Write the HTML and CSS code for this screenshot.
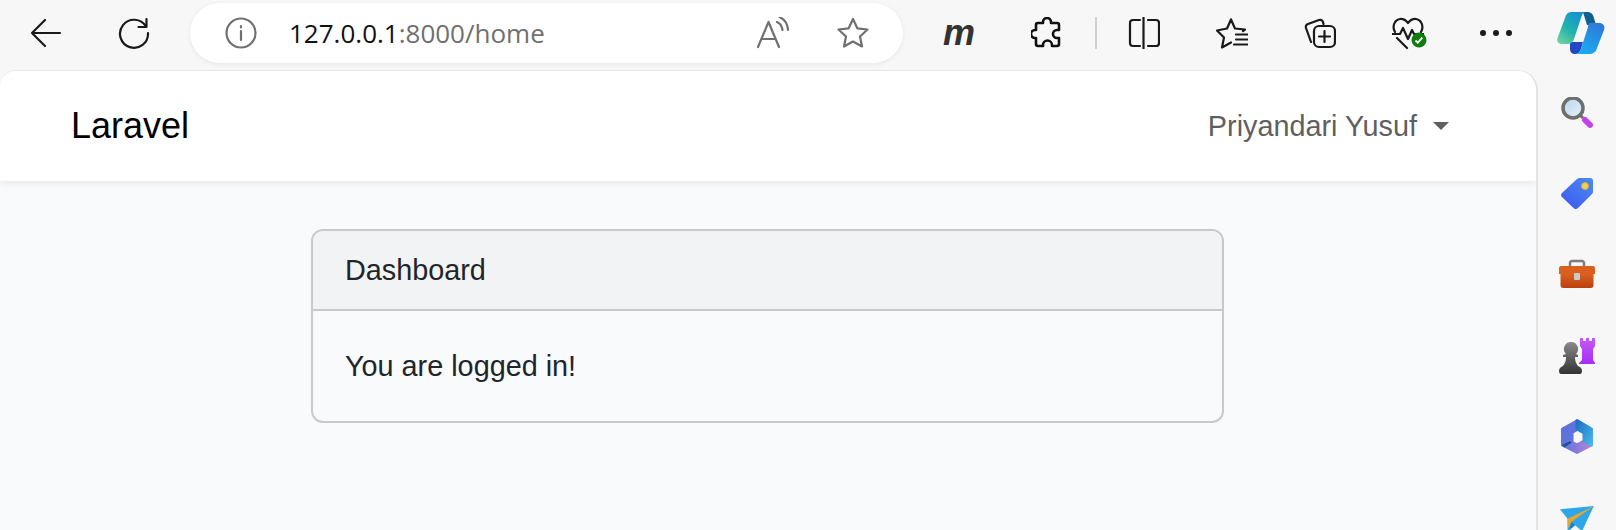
FILE: index.html
```html
<!DOCTYPE html>
<html lang="en">
<head>
    <meta charset="UTF-8">
    <meta name="viewport" content="width=device-width, initial-scale=1.0">
    <title>Laravel</title>
    <link rel="stylesheet" href="styles.css">
</head>
<body>
    <!-- browser toolbar -->
    <header class="toolbar">
        <div class="tool-btn">
            <svg class="icon" viewBox="0 0 32 32"><path d="M30 16H2M15 3 2 16l13 13"/></svg>
        </div>
        <div class="tool-btn">
            <svg class="icon" viewBox="0 0 32 32"><path d="M28 9.500A14 14 0 1 0 30 16M28.500 2v8h-8"/></svg>
        </div>

        <div class="address-bar">
            <svg class="icon icon-grey" viewBox="0 0 32 32">
                <circle cx="16" cy="16" r="14.500"/>
                <path d="M16 14v9M16 9v1.500"/>
            </svg>
            <div class="url"><span class="url-host">127.0.0.1</span>:8000/home</div>
            <svg class="icon icon-grey read-aloud" viewBox="0 0 32 32">
                <path d="M1 30 11.500 5 22 30M4.500 22h14M20 5c3 1.500 5 4 5.500 8M22.500 0c4.500 2 8 6 8.500 13"/>
            </svg>
            <svg class="icon icon-grey star" viewBox="0 0 32 32">
                <path d="m16 2 4.300 9.300 10.200 1.200-7.500 7 2 10L16 24.500 7 29.500l2-10-7.500-7 10.200-1.200z"/>
            </svg>
        </div>

        <div class="tool-btn tool-btn-first"><span class="ext-m">m</span></div>
        <div class="tool-btn">
            <svg class="icon icon-bold" viewBox="0 0 32 32">
                <path d="M12 6V5a4 4 0 0 1 8 0v1h6a2 2 0 0 1 2 2v5h-2a4 4 0 0 0 0 8h2v6a2 2 0 0 1-2 2h-5v-1a4.500 4.500 0 0 0-9 0v1H7a2 2 0 0 1-2-2v-6H4a4 4 0 0 1 0-8h1V8a2 2 0 0 1 2-2z"/>
            </svg>
        </div>
        <div class="divider"></div>

        <div class="tool-btn">
            <svg class="icon" viewBox="0 0 32 32"><path d="M12 3H5a3 3 0 0 0-3 3v20a3 3 0 0 0 3 3h7M20 3h8a3 3 0 0 1 3 3v20a3 3 0 0 1-3 3h-8M15.500 0v32"/></svg>
        </div>
        <div class="tool-btn">
            <svg class="icon" viewBox="0 0 32 32"><path d="m15 2 4 9 10 1-2 1.500M15 2l-4 9-10 2 7 7-2 10 9-5M20 17h12M20 22h12M18 27h14" transform="translate(0 .5)"/></svg>
        </div>
        <div class="tool-btn">
            <svg class="icon" viewBox="0 0 32 32">
                <path d="M7 25 2 11c-.5-2 .5-3.500 2-4l11-4c2-.5 3.500 .5 4 2l.5 2"/>
                <rect x="10" y="9" width="21" height="21" rx="5"/>
                <path d="M20.500 14v11M15 19.500h11"/>
            </svg>
        </div>
        <div class="tool-btn">
            <svg class="icon" viewBox="0 0 32 32">
                <path d="M3 15C0 10 2 3 8 2c4-.5 6 1.500 8 4 2-2.500 4-4.500 8-4 6 1 8 8 5 13"/>
                <path d="M0 17h8l3-6 5 11 4-9 2 4h10M5 21l10 10"/>
            </svg>
            <svg class="health-badge" viewBox="0 0 16 16">
                <circle cx="8" cy="8" r="7.500" fill="#107c10"/>
                <path d="m4.500 8.500 2.300 2.200 4.500-5" fill="none" stroke="#fff" stroke-width="1.800"/>
            </svg>
        </div>
        <div class="tool-btn">
            <div class="dots"><span></span><span></span><span></span></div>
        </div>
        <div class="copilot">
            <svg class="copilot-logo" viewBox="0 0 48 42">
                <defs>
                    <linearGradient id="cpA" x1="0" y1="1" x2="0.700" y2="0">
                        <stop offset="0" stop-color="#7bd99a"/>
                        <stop offset="0.500" stop-color="#1fb2b0"/>
                        <stop offset="1" stop-color="#1692cf"/>
                    </linearGradient>
                    <linearGradient id="cpB" x1="0.800" y1="0" x2="0.200" y2="1">
                        <stop offset="0" stop-color="#2f78dc"/>
                        <stop offset="1" stop-color="#18b0ee"/>
                    </linearGradient>
                </defs>
                <path fill="#135f8f" d="M26 0h4c4 0 6 2 7 6l2 7H30z"/>
                <path fill="#2347c6" d="M13 30h13l-2 7c-1 3-3 5-6 5s-5-2-5-5z"/>
                <path fill="url(#cpA)" d="M14 0h15c-3 0-4 3-5 6l-7 21c-1 3-3 5-7 5H4c-3 0-4.500-3-3.500-6L8 6c1-4 3-6 6-6z"/>
                <path fill="url(#cpB)" d="M32 11h10c4 0 6.500 3 5 7l-7 18c-1 4-4 6-8 6H18c3 0 5-2 6-5l7-22c0-2 .5-3 1-4z"/>
            </svg>
        </div>
    </header>

    <div class="window">
        <div class="page">
            <nav class="navbar">
                <a class="navbar-brand">Laravel</a>
                <a class="user-menu">Priyandari Yusuf<span class="caret"></span></a>
            </nav>

            <main class="content">
                <section class="card">
                    <div class="card-header">Dashboard</div>
                    <div class="card-body">You are logged in!</div>
                </section>
            </main>
        </div>

        <!-- edge sidebar -->
        <aside class="sidebar">
            <svg class="side-icon" viewBox="0 0 36 32">
                <defs>
                    <linearGradient id="lens" x1="0" y1="0" x2="1" y2="1">
                        <stop offset="0" stop-color="#b5d6ef"/>
                        <stop offset="1" stop-color="#e8f2fa"/>
                    </linearGradient>
                </defs>
                <path stroke="#c542e8" stroke-width="6" stroke-linecap="round" d="m26 23 5 5"/>
                <path stroke="#6e6e6e" stroke-width="3" d="m21 18 3 3"/>
                <circle cx="14" cy="11" r="10" fill="url(#lens)" stroke="#6e6e6e" stroke-width="3.500"/>
            </svg>
            <svg class="side-icon" viewBox="0 0 32 32">
                <defs>
                    <linearGradient id="tag" x1="0" y1="1" x2="1" y2="0">
                        <stop offset="0" stop-color="#3d55f0"/>
                        <stop offset="1" stop-color="#4a8cf0"/>
                    </linearGradient>
                </defs>
                <path fill="url(#tag)" d="M19 0h10c2 0 3 1 3 3v10c0 1 0 2-1 3L17 30c-1.500 1.500-3 1.500-4.500 0L1 19c-1.500-1.500-1-3 0-4L16 1c1-1 2-1 3-1z"/>
                <circle cx="24" cy="8" r="3.500" fill="#e9d35a" stroke="#d8a93a"/>
            </svg>
            <svg class="side-icon" viewBox="0 0 36 32">
                <defs>
                    <linearGradient id="box" x1="0" y1="0" x2="0" y2="1">
                        <stop offset="0" stop-color="#d9601f"/>
                        <stop offset="1" stop-color="#b9400f"/>
                    </linearGradient>
                </defs>
                <path fill="none" stroke="#7d7d7d" stroke-width="2.500" d="M11 9V4c0-1 1-2 2-2h10c1 0 2 1 2 2v5"/>
                <path fill="#d9601f" d="M0 9c0-1 1-2 2-2h32c1 0 2 1 2 2v6H0z"/>
                <path fill="url(#box)" d="M1.500 15h33v11c0 2-1 3-3 3h-27c-2 0-3-1-3-3z"/>
                <rect x="15" y="14" width="6" height="7" rx="1" fill="#c9c9c9"/>
            </svg>
            <svg class="side-icon side-icon-tall" viewBox="0 0 36 36">
                <defs>
                    <linearGradient id="rook" x1="0" y1="0" x2="0" y2="1">
                        <stop offset="0" stop-color="#c65cf2"/>
                        <stop offset="1" stop-color="#a62cf5"/>
                    </linearGradient>
                    <linearGradient id="pawn" x1="0" y1="0" x2="0" y2="1">
                        <stop offset="0" stop-color="#8a8a8a"/>
                        <stop offset="1" stop-color="#333"/>
                    </linearGradient>
                </defs>
                <path fill="url(#rook)" d="M21 0h3v3h3V0h3v3h3V0h3v8l-2 3v11l2 3v1H20v-1l3-3V11l-2-3z"/>
                <path fill="url(#pawn)" d="M12 4a7 7 0 0 1 5 12l2 1v2h-3c0 4 1 6 3 9 2 1 4 2 4 5 0 2-1 3-2 3H2c-1 0-2-1-2-3 0-3 2-4 4-5 2-3 3-5 3-9H4v-2l3-1A7 7 0 0 1 12 4z"/>
            </svg>
            <svg class="side-icon side-icon-tall" viewBox="0 0 32 36">
                <defs>
                    <linearGradient id="m365a" x1="0" y1="0" x2="1" y2="1">
                        <stop offset="0" stop-color="#1d6fc4"/>
                        <stop offset="1" stop-color="#45b8e8"/>
                    </linearGradient>
                    <linearGradient id="m365b" x1="0" y1="0" x2="1" y2="0">
                        <stop offset="0" stop-color="#5f73dc"/>
                        <stop offset="1" stop-color="#b483d8"/>
                    </linearGradient>
                </defs>
                <g stroke-width="3" stroke-linejoin="round">
                    <path fill="#5f73dc" stroke="#5f73dc" d="M15 2.500 1.500 10v15l7.500 3 2-6.500v-8l6-3.500z"/>
                    <path fill="url(#m365b)" stroke="url(#m365b)" d="M30.500 26 16 33.500 1.500 26 9 22l7 4 7-4z"/>
                    <path fill="url(#m365a)" stroke="url(#m365a)" d="M16 1.500 30.500 10v16L23 22v-8l-7-4z"/>
                </g>
                <path fill="#1f4f9c" d="m1 26 8-4 2 1.500-8 5z"/>
            </svg>
            <svg class="side-icon" viewBox="0 0 36 32">
                <g transform="translate(1 4) scale(.94 .8)">
                    <path fill="#2ba7ea" d="M0 4 36 0 24 30c-.5 1-1.500 1-2 0l-6-6-6 6c-1 1-2 0-2-1V16z"/>
                    <path fill="#e9a52b" d="m8 16 28-16-24 20-3 8z"/>
                    <path fill="#1a7fc9" d="m12 20 4 4-6 6z"/>
                </g>
            </svg>
        </aside>
    </div>
</body>
</html>
```

FILE: styles.css
```css
html, body {
    height: 100%;
}

body {
    margin: 0;
    overflow: hidden;
    display: flex;
    flex-direction: column;
    background-color: #f7f7f7;
    font-family: "Liberation Sans", Arial, sans-serif;
}

/* toolbar */
.toolbar {
    flex: 0 0 70px;
    box-sizing: border-box;
    height: 70px;
    padding: 3px 0 7px 2px;
    display: flex;
    align-items: center;
}

.tool-btn {
    position: relative;
    flex: 0 0 88px;
    display: flex;
    align-items: center;
    justify-content: center;
}

.tool-btn-first {
    margin-left: 12px;
}

.icon {
    width: 32px;
    height: 32px;
    fill: none;
    stroke: #1a1a1a;
    stroke-width: 2.200;
    stroke-linejoin: round;
    stroke-linecap: round;
}

.icon-grey {
    stroke: #707070;
}

.icon-bold {
    stroke: #111;
    stroke-width: 2.600;
}

.address-bar {
    flex: 0 0 713px;
    box-sizing: border-box;
    height: 60px;
    margin-left: 12px;
    padding: 0 34px 0 35px;
    display: flex;
    align-items: center;
    background-color: #fff;
    border-radius: 30px;
    box-shadow: 0 1px 4px rgba(0, 0, 0, 0.08);
}

.url {
    flex: 1;
    margin-left: 32px;
    font-family: "Open Sans", sans-serif;
    font-size: 26px;
    color: #6f6f6f;
}

.url-host {
    color: #111;
}

.star {
    margin-left: 48px;
}

.ext-m {
    font-size: 36px;
    font-weight: bold;
    font-style: italic;
    line-height: 32px;
    color: #333;
}

.divider {
    flex: 0 0 2px;
    height: 32px;
    margin: 0 3px 0 4px;
    background-color: #d0d0d0;
}

.health-badge {
    position: absolute;
    left: 47px;
    top: 15px;
    width: 16px;
    height: 16px;
}

.dots {
    display: flex;
    gap: 7px;
}

.dots span {
    width: 6px;
    height: 6px;
    border-radius: 50%;
    background-color: #1a1a1a;
}

.copilot {
    flex: 0 0 48px;
    margin-left: 17px;
    display: flex;
}

.copilot-logo {
    width: 48px;
    height: 42px;
}

/* page area */
.window {
    flex: 1;
    display: flex;
    min-height: 0;
}

.page {
    flex: 0 0 1538px;
    background-color: #f8fafc;
    border-radius: 16px 20px 0 0;
    border-top: 1px solid #e8e8e8;
    border-right: 2px solid #e4e4e4;
    box-sizing: border-box;
    overflow: hidden;
}

.navbar {
    height: 110px;
    box-sizing: border-box;
    padding: 0 87px 0 71px;
    display: flex;
    align-items: center;
    justify-content: space-between;
    background-color: #fff;
    box-shadow: 0 2px 8px rgba(0, 0, 0, 0.08);
}

.navbar-brand {
    font-size: 36px;
    color: #000;
}

.user-menu {
    display: flex;
    align-items: center;
    font-size: 28.800px;
    color: #5f5f5f;
}

.caret {
    margin-left: 16px;
    border-top: 8px solid #5f5f5f;
    border-left: 8px solid transparent;
    border-right: 8px solid transparent;
}

.content {
    padding-top: 48px;
    padding-right: 1px;
    display: flex;
    justify-content: center;
}

.card {
    width: 913px;
    box-sizing: border-box;
    border: 2px solid #c8c9cc;
    border-radius: 12px;
    font-size: 28.800px;
    line-height: 46px;
    color: #212529;
}

.card-header {
    padding: 16px 32px;
    background-color: #f2f3f5;
    border-bottom: 2px solid #c8c9cc;
    border-radius: 10px 10px 0 0;
}

.card-body {
    padding: 32px;
}

/* sidebar */
.sidebar {
    flex: 1;
    padding-top: 27px;
    display: flex;
    flex-direction: column;
    align-items: center;
    gap: 49px;
}

.side-icon {
    flex: 0 0 32px;
    width: 36px;
    height: 32px;
}

.side-icon-tall {
    flex-basis: 36px;
    height: 36px;
    margin: -2px 0;
}
```
